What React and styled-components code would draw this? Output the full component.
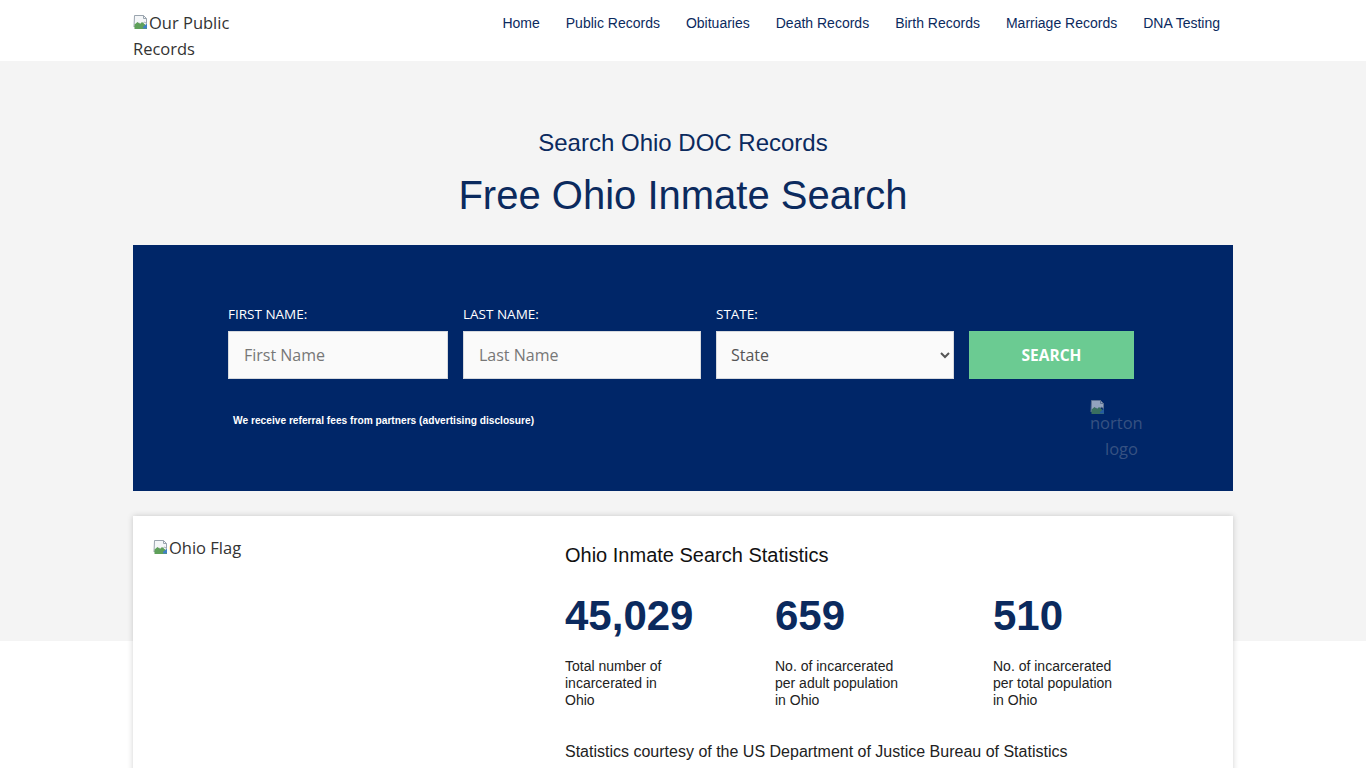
import styled, { createGlobalStyle } from 'styled-components';

const navy = '#0b2a5e';
const boxBlue = '#002668';

const GlobalStyle = createGlobalStyle`
    html, body {
        margin: 0;
        padding: 0;
        background: #ffffff;
        font-family: "Liberation Sans", Arial, sans-serif;
    }
    * {
        box-sizing: border-box;
    }
`;

const Header = styled.header`
    height: 61px;
    background: #ffffff;
`;

const Container = styled.div`
    width: 1100px;
    margin: 0 auto;
`;

const HeaderInner = styled(Container)`
    display: flex;
    justify-content: space-between;
    align-items: flex-start;
`;

const Logo = styled.div`
    width: 125px;
    padding-top: 10px;
    font-family: "Open Sans", "Noto Sans", sans-serif;
    font-size: 16.5px;
    line-height: 26px;
    color: #333;
`;

const Nav = styled.nav`
    display: flex;
    padding-top: 14px;
`;

const NavLink = styled.a`
    padding: 0 13px;
    font-size: 14px;
    line-height: 18px;
    color: ${navy};
    text-decoration: none;
`;

const Page = styled.main`
    background: linear-gradient(#f4f4f4 0, #f4f4f4 580px, #ffffff 580px);
    padding-top: 67px;
`;

const Eyebrow = styled.h2`
    margin: 0;
    text-align: center;
    font-weight: 400;
    font-size: 24px;
    line-height: 30px;
    color: ${navy};
`;

const Title = styled.h1`
    margin: 14px 0 0;
    text-align: center;
    font-weight: 400;
    font-size: 40px;
    line-height: 46px;
    color: ${navy};
`;

const SearchBox = styled(Container)`
    margin-top: 27px;
    height: 246px;
    background: ${boxBlue};
    padding: 61px 99px 0 95px;
    display: flex;
    flex-direction: column;
`;

const FormRow = styled.div`
    display: flex;
    align-items: flex-end;
    gap: 15px;
`;

const Field = styled.div`
    display: flex;
    flex-direction: column;
    width: ${p => p.$w}px;
`;

const Label = styled.label`
    font-family: "Open Sans", "Noto Sans", sans-serif;
    font-size: 13.5px;
    line-height: 16px;
    color: #ffffff;
    margin-bottom: 9px;
`;

const Input = styled.input`
    height: 48px;
    border: 1px solid #d6d9de;
    background: #fafafa;
    padding: 0 15px;
    font-family: "Open Sans", "Noto Sans", sans-serif;
    font-size: 16px;
    color: #333;
    outline: none;
    &::placeholder {
        color: #777;
    }
`;

const Select = styled.select`
    height: 48px;
    border: 1px solid #d6d9de;
    background: #fafafa;
    padding: 0 10px;
    font-family: "Open Sans", "Noto Sans", sans-serif;
    font-size: 16px;
    color: #555;
`;

const SearchButton = styled.button`
    width: 165px;
    height: 48px;
    border: none;
    background: #6bcb92;
    color: #ffffff;
    font-family: "Open Sans", "Noto Sans", sans-serif;
    font-weight: 700;
    font-size: 15.5px;
    cursor: pointer;
`;

const BottomRow = styled.div`
    display: flex;
    justify-content: space-between;
    align-items: flex-start;
    margin-top: 16px;
`;

const Disclosure = styled.p`
    margin: 20px 0 0 5px;
    font-size: 10.2px;
    font-weight: 700;
    color: #ffffff;
`;

const Norton = styled.div`
    width: 48px;
    margin-right: -4px;
    text-align: right;
    font-family: "Open Sans", "Noto Sans", sans-serif;
    font-size: 16.5px;
    line-height: 26px;
    color: #5a6f94;
    opacity: 0.6;
`;

const IconSlot = styled.div`
    text-align: left;
    height: 15px;
`;

const BrokenImage = styled.span`
    display: inline-block;
    width: 16px;
    height: 16px;
    vertical-align: -1px;
`;

const StatsCard = styled(Container)`
    margin-top: 25px;
    background: #ffffff;
    box-shadow: 0 0 6px rgba(0, 0, 0, 0.18);
    display: flex;
    padding: 21px 20px 40px;
    min-height: 300px;
`;

const FlagCol = styled.div`
    width: 412px;
    font-family: "Open Sans", "Noto Sans", sans-serif;
    font-size: 16.5px;
    line-height: 22px;
    color: #333;
`;

const StatsCol = styled.div`
    flex: 1;
    padding-top: 6px;
`;

const StatsTitle = styled.h3`
    margin: 0;
    font-weight: 400;
    font-size: 20px;
    line-height: 24px;
    color: #111;
`;

const StatsGrid = styled.div`
    display: grid;
    grid-template-columns: 210px 218px 200px;
    margin-top: 24px;
`;

const Number = styled.div`
    font-weight: 700;
    font-size: 42px;
    line-height: 50px;
    color: ${navy};
`;

const StatText = styled.div`
    margin-top: 17px;
    width: ${p => p.$w}px;
    font-size: 14px;
    line-height: 17px;
    color: #222;
`;

const Courtesy = styled.p`
    margin: 33px 0 0;
    font-size: 16px;
    line-height: 20px;
    color: #222;
`;

const BrokenIcon = () => (
    <BrokenImage>
        <svg width="16" height="16" viewBox="0 0 16 16">
            <path d="M1.5 1.5h9l3 3v5l-2 -1.5-3 3-2.5-2-5 4z" fill="#f4f6f8" stroke="#9aa4ae" strokeWidth="1" />
            <path d="M1.5 10.5l3-2.5 2.5 2 2-2 5 4v3h-12.5z" fill="#5fa05a" />
            <path d="M10.5 1.5v3h3" fill="none" stroke="#9aa4ae" strokeWidth="1" />
            <path d="M10 13l4-3.5v5h-4z" fill="#3f7fc8" />
        </svg>
    </BrokenImage>
);

const navItems = ['Home', 'Public Records', 'Obituaries', 'Death Records', 'Birth Records', 'Marriage Records', 'DNA Testing'];

const stats = [
    { value: '45,029', text: 'Total number of incarcerated in Ohio', width: 112 },
    { value: '659', text: 'No. of incarcerated per adult population in Ohio', width: 130 },
    { value: '510', text: 'No. of incarcerated per total population in Ohio', width: 130 },
];

const App = () => {
    return (
        <>
            <GlobalStyle />
            <Header>
                <HeaderInner>
                    <Logo>
                        <BrokenIcon />Our Public Records
                    </Logo>
                    <Nav>
                        {navItems.map(item => (
                            <NavLink key={item} href="#">{item}</NavLink>
                        ))}
                    </Nav>
                </HeaderInner>
            </Header>
            <Page>
                <Eyebrow>Search Ohio DOC Records</Eyebrow>
                <Title>Free Ohio Inmate Search</Title>
                <SearchBox>
                    <FormRow>
                        <Field $w={220}>
                            <Label>FIRST NAME:</Label>
                            <Input placeholder="First Name" />
                        </Field>
                        <Field $w={238}>
                            <Label>LAST NAME:</Label>
                            <Input placeholder="Last Name" />
                        </Field>
                        <Field $w={238}>
                            <Label>STATE:</Label>
                            <Select defaultValue="">
                                <option value="">State</option>
                                <option value="OH">Ohio</option>
                            </Select>
                        </Field>
                        <SearchButton>SEARCH</SearchButton>
                    </FormRow>
                    <BottomRow>
                        <Disclosure>We receive referral fees from partners (advertising disclosure)</Disclosure>
                        <Norton>
                            <IconSlot><BrokenIcon /></IconSlot>
                            norton logo
                        </Norton>
                    </BottomRow>
                </SearchBox>
                <StatsCard>
                    <FlagCol>
                        <BrokenIcon />Ohio Flag
                    </FlagCol>
                    <StatsCol>
                        <StatsTitle>Ohio Inmate Search Statistics</StatsTitle>
                        <StatsGrid>
                            {stats.map(s => (
                                <div key={s.value}>
                                    <Number>{s.value}</Number>
                                    <StatText $w={s.width}>{s.text}</StatText>
                                </div>
                            ))}
                        </StatsGrid>
                        <Courtesy>Statistics courtesy of the US Department of Justice Bureau of Statistics</Courtesy>
                    </StatsCol>
                </StatsCard>
            </Page>
        </>
    );
};

export default App;
